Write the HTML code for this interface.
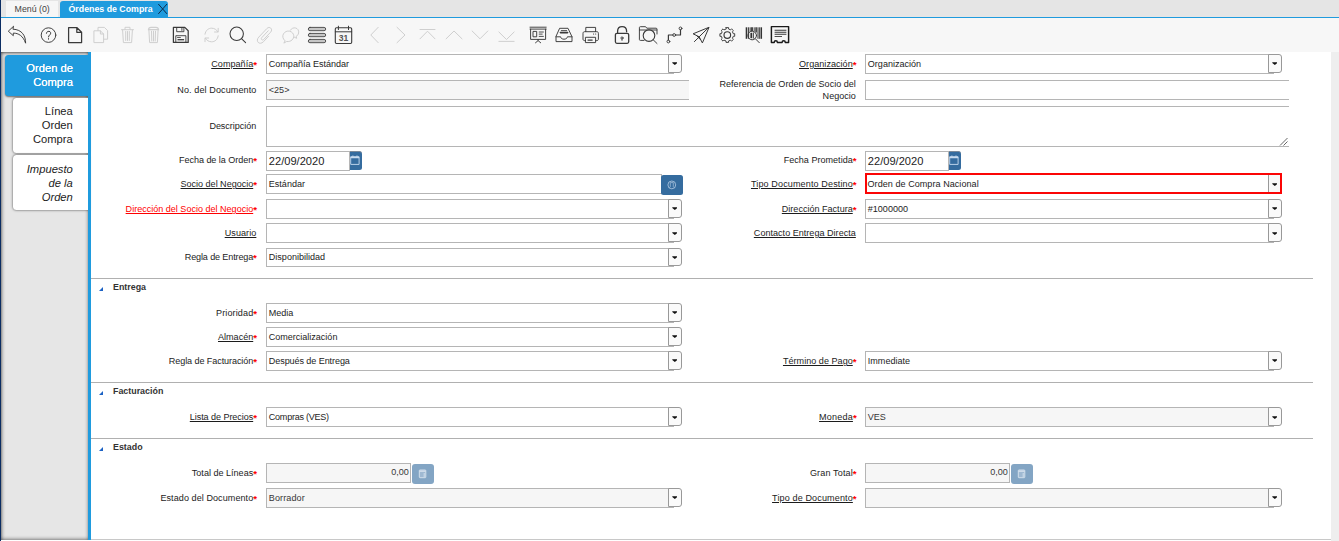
<!DOCTYPE html>
<html lang="es"><head><meta charset="utf-8"><title>Órdenes de Compra</title>
<style>
html,body{margin:0;padding:0}
body{width:1339px;height:541px;overflow:hidden;background:#fff;position:relative;font-family:"Liberation Sans",sans-serif;font-size:9px;color:#333}
div,span{box-sizing:border-box}
.a{position:absolute}
#tabbar{left:0;top:0;width:1339px;height:17px;background:#e5e5e5}
#navy{left:0;top:0;width:1.3px;height:541px;background:#0b2d63}
#tab1{left:6px;top:1px;width:52.4px;height:16px;background:#f6f6f6;color:#444;font-size:8.8px;line-height:16px;text-align:center}
#tab2{left:60px;top:1px;width:108px;height:17px;background:#1f9bde;border-radius:3px 3px 0 0;color:#fff;font-weight:bold;font-size:8.8px;line-height:16px;padding-left:8.5px;white-space:nowrap}
#bline{left:0;top:17px;width:1339px;height:1.2px;background:#1f9bde}
#toolbar{left:1px;top:18px;width:1338px;height:34px;background:#f7f7f7}
#side{left:1px;top:52px;width:88px;height:487.5px;background:#e6e6e6;box-shadow:inset 0 0 4px 0 rgba(0,0,0,.7),inset 0 1px 2px 0 rgba(0,0,0,.25)}
#vline{left:88.3px;top:52px;width:2.5px;height:488px;background:#1f9bde;z-index:3}
#rstrip{left:1331px;top:52px;width:8px;height:489px;background:#eee}
#botline{left:91px;top:539px;width:1240px;height:1px;background:#c8c8c8}
.stab{right:1250px;text-align:right;font-size:11.2px;line-height:14.2px;padding-right:16px;color:#222}
#st1{left:5px;top:55px;width:84px;height:41px;background:#1f9bde;border-radius:3.5px 0 0 3.5px;color:#fff;padding-top:6px;text-shadow:0 0 .4px #fff;box-shadow:0 1px 2px rgba(0,0,0,.55)}
#st2{left:12.8px;top:97.8px;width:76px;height:54.8px;background:#fff;border-radius:3.5px 0 0 3.5px;padding-top:6px;box-shadow:0 0 2.5px rgba(0,0,0,.75)}
#st3{left:12.8px;top:155px;width:76px;height:54.8px;background:#fff;border-radius:3.5px 0 0 3.5px;padding-top:7px;font-style:italic;box-shadow:0 0 2.5px rgba(0,0,0,.75)}
.lbl{height:20px;line-height:20px;text-align:right;white-space:nowrap;color:#1c1c1c;font-size:9.05px}
.lbl u{text-decoration:underline;text-underline-offset:1px}
.lbl i{font-style:normal;color:#f00;font-size:9.7px;font-weight:bold;position:relative;top:0.9px;line-height:0}
.red{color:#f00}
.fld{height:19.5px;border:1px solid #b5b5b5;background:#fff;font-size:9.05px;line-height:17.5px;padding-left:1.8px;padding-top:0.8px;color:#1c1c1c;white-space:nowrap;overflow:hidden}
.ro{background:#f6f6f6;color:#363636}
.cbtn{width:13.5px;height:18.7px;border:1px solid #999;border-radius:0 3px 3px 0;background:#fafafa}
.arr{width:5.6px;height:3.7px}
.stub{height:1px;background:#b5b5b5;width:5px}
.sep{left:91px;width:1222px;height:1px;background:#b0b0b0}
.grp{left:113px;font-weight:bold;font-size:8.9px;line-height:12px;height:12px;color:#333}
.tri{left:99.4px;width:0;height:0;border-left:4.7px solid transparent;border-bottom:4.4px solid #1c62c4}
.date{font-size:11.1px;width:84px;padding-top:1.1px}
.dbtn{width:12px;height:19px;background:#356c9f;border-radius:0 2.5px 2.5px 0;border-top:1px solid #7d8a98}
.sbtn{width:21.8px;height:19.8px;background:#356c9f;border-radius:2.5px}
.nbtn{width:21.8px;height:19.8px;background:#83a5c4;border-radius:3px}
</style></head>
<body>
<div class="a" id="tabbar"></div>
<div class="a" id="tab1">Menú (0)</div>
<div class="a" id="tab2">Órdenes de Compra</div>
<svg class="a" style="left:156px;top:2px" width="13" height="14" viewBox="156 2 13 14"><path d="M158.3 4L167 13.9M167 4L158.3 13.9" stroke="#0b2b4a" stroke-width="1" fill="none"/></svg>

<div class="a" id="toolbar"></div>
<div class="a" id="bline"></div>
<svg class="a" style="left:0;top:0" width="800" height="52" viewBox="0 0 800 52" fill="none" stroke="#3a3a3a" stroke-width="0.95" stroke-linecap="round" stroke-linejoin="round">
<!-- undo -->
<path d="M13.3 26.5L8.3 31.2L13.3 35.7V33.1C18.6 33.1 23.2 36 25.6 43.2C25.8 36 22 29.5 13.3 29.2Z"/>
<!-- help -->
<circle cx="48.5" cy="35.1" r="7.3"/>
<path d="M46.4 33.3C46.4 30.6 50.7 30.6 50.7 33.2C50.7 34.9 48.5 35 48.5 36.9M48.5 38.6V39.2" stroke-width="1"/>
<!-- new -->
<path d="M68.6 27.5H76.8L81.6 32.3V42.5H68.6ZM76.8 27.5V32.3H81.6" stroke-width="1.25"/>
<g stroke="#cfcfcf" stroke-width="1">
<!-- copy -->
<path d="M98 30.5V27.4H104.4L107.6 30.6V39.2H103.8"/>
<path d="M94.3 30.8H100.4L103.6 34V42.6H94.3ZM100.4 30.8V34H103.6"/>
<!-- trash 1 -->
<path d="M121.5 29.7H133.5M125 29.5V27.3H130V29.5M122.6 29.9L123.4 42.6H131.6L132.4 29.9M125.7 31.5V40.5M127.5 31.5V40.5M129.3 31.5V40.5"/>
<!-- trash 2 -->
<path d="M148.4 29.7C148.6 28 149.8 27.3 151 27.3H156C157.2 27.3 158.4 28 158.6 29.7M148.4 29.7H158.6" stroke-width="1.2"/>
<path d="M148.9 30L149.6 42.6H157.4L158.1 30M151.5 31.2L151.8 41M153.5 31.2V41M155.5 31.2L155.2 41"/>
<!-- refresh -->
<path d="M205 34.2C205.6 30.2 208.5 28.2 211.6 28.2C214.3 28.2 216.6 29.6 217.8 31.8M218.2 28.3V32H214.5"/>
<path d="M218.2 35.8C217.6 39.8 214.7 41.8 211.6 41.8C208.9 41.8 206.6 40.4 205.4 38.2M205 41.7V38H208.7"/>
<!-- attach -->
<path d="M268.2 30.8L261.8 37.6C260.4 39.1 262.3 40.9 263.7 39.5L270.6 32.2C273.4 29.2 269.6 25.6 266.8 28.6L258.8 37.1C254.8 41.4 259.8 45.6 263.5 41.7L268.6 36.2"/>
<!-- chat -->
<path d="M290.4 30.2C292.6 26 299.5 27.5 298.6 33C298.3 34.6 297.3 35.8 296.2 36.4L296.6 38.3L294.4 37.2"/>
<path d="M284.8 40.6C279.8 36.2 284.6 30 289.6 31.2C296.4 33 294.4 42.4 286.6 41.5L284.2 42.9Z"/>
<!-- nav -->
<path d="M378.2 27.3L370.8 35L378.2 42.7"/>
<path d="M397 27.3L405 35L397 42.7"/>
<path d="M420 29.5H435M420 38.8L427.5 31.2L435 38.8"/>
<path d="M446.1 38.8L454 31L462 38.8"/>
<path d="M472.1 31L480 38.8L487.8 31"/>
<path d="M498.9 32L506.5 39.5L514.1 32M498.9 41.4H514.1"/>
</g>
<!-- save -->
<path d="M173.4 27.4H184.8L188.2 30.8V42.4H173.4Z" stroke-width="1.25"/>
<path d="M176.7 27.6V31.7H183.9V27.6M181.9 28.4V30.4" stroke-width="0.9"/>
<path d="M175.8 42.2V35.7H185.9V42.2" stroke-width="0.9"/>
<path d="M177.5 37.5H180.4" stroke-width="0.8"/>
<path d="M177.5 39.7H184.1" stroke-width="1.3" stroke-linecap="butt"/>
<!-- search -->
<circle cx="236.7" cy="33.8" r="6.7" stroke-width="1.05"/>
<path d="M241.5 38.7L245.6 42.7" stroke-width="1.05"/>
<!-- list -->
<g fill="#c6c6c6" stroke-width="0.85">
<rect x="308.3" y="27.4" width="17.4" height="3.3" rx="1.65"/>
<rect x="308.3" y="33.4" width="17.4" height="3.3" rx="1.65"/>
<rect x="308.3" y="39.4" width="17.4" height="3.3" rx="1.65"/>
</g>
<!-- calendar -->
<rect x="335.3" y="27.8" width="16.4" height="15.7" rx="1.2" stroke-width="1.1"/>
<path d="M335.3 31.8H351.7M338.4 26.2V29.6M348.5 26.2V29.6" stroke-width="1"/>
<text x="343.6" y="41.3" font-family="Liberation Sans, sans-serif" font-size="8.6" font-weight="bold" text-anchor="middle" fill="#555" stroke="none">31</text>
<!-- presentation -->
<path d="M530 27.2H546.2M530 29.1H546.2M530.6 29.1V39.4H545.6V29.1M538.1 39.4V40.6L535.5 42.8M538.1 40.6L540.7 42.8"/>
<rect x="533.4" y="31.4" width="3.3" height="5.4"/>
<path d="M539.2 32H543.4M539.2 34.1H542.2M539.2 36.4H543.4" stroke-width="0.9"/>
<!-- inbox -->
<path d="M560 28.3H568L572 36.8V41.6H556V36.8ZM556 36.8H560.6C560.9 40 567.1 40 567.4 36.8H572"/>
<path d="M561.3 30.6H566.7" stroke-width="0.9"/><path d="M560.4 32.6H567.6" stroke-width="1.6"/>
<!-- print -->
<path d="M585.8 31.6V27.4H595.6V31.6M585.6 40.6H584.6C583.6 40.6 583 40 583 39V33.3C583 32.3 583.6 31.7 584.6 31.7H596.8C597.8 31.7 598.4 32.3 598.4 33.3V39C598.4 40 597.8 40.6 596.8 40.6H595.8M585.8 37.3H595.6V42.6H585.8Z"/>
<path d="M588 40.1H592.2" stroke-width="1.2"/><path d="M593.5 34H593.6M595.6 34H595.7" stroke-width="1.1"/>
<!-- lock -->
<rect x="615.4" y="33.3" width="13.3" height="10" rx="1.5" stroke-width="1.3"/>
<path d="M617.6 33.2V31.2C617.6 25.2 626.6 25.2 626.6 31.2V31.8" stroke-width="1.3"/>
<circle cx="622" cy="38" r="1.1" stroke-width="0.9"/><path d="M622 39.2V40.4" stroke-width="0.9"/>
<!-- folder zoom -->
<path d="M644 40.4H640.4C639.7 40.4 639.4 40.1 639.4 39.4V27.6C639.4 27 639.7 26.7 640.4 26.7H645.6L646.8 28.2H656C656.7 28.2 657 28.5 657 29.2V34M639.4 30H656.8"/>
<circle cx="649" cy="35.6" r="5.8" stroke-width="1.1"/><path d="M653.2 39.8L657 43.5"/>
<!-- workflow -->
<path d="M668.4 40V35H672.7M675.7 35H680.5V29.9" stroke-width="1.2"/>
<circle cx="668.4" cy="41.5" r="1.4"/><circle cx="674.2" cy="35" r="1.4"/><circle cx="680.5" cy="28.4" r="1.4"/>
<!-- send -->
<path d="M708.7 27.4L693.1 33.8L699.2 36.8L702.2 42.6ZM708.7 27.4L699.2 36.8M698.8 37.3L694.4 41.6M697 36L700.6 39.8" stroke-width="1"/>
<!-- gear -->
<circle cx="727.3" cy="35" r="3.3" stroke-width="1.15"/>
<path d="M726.00 27.61L728.60 27.61L728.57 29.03L730.62 29.88L731.60 28.86L733.44 30.70L732.42 31.68L733.27 33.73L734.69 33.70L734.69 36.30L733.27 36.27L732.42 38.32L733.44 39.30L731.60 41.14L730.62 40.12L728.57 40.97L728.60 42.39L726.00 42.39L726.03 40.97L723.98 40.12L723.00 41.14L721.16 39.30L722.18 38.32L721.33 36.27L719.91 36.30L719.91 33.70L721.33 33.73L722.18 31.68L721.16 30.70L723.00 28.86L723.98 29.88L726.03 29.03Z" stroke-width="0.95"/>
<!-- barcode zoom -->
<g stroke-linecap="butt" stroke="#333">
<path d="M746.5 27.3V38.8" stroke-width="1.6"/><path d="M748.6 27.3V38.8" stroke-width="1"/><path d="M750.2 27.3V31.6" stroke-width="0.9"/><path d="M752 27.3V31" stroke-width="1.8"/><path d="M754.2 27.3V31.3" stroke-width="0.9"/><path d="M756.1 27.3V32.6" stroke-width="1.5"/><path d="M758 27.3V38.8" stroke-width="1"/><path d="M759.6 27.3V38.8" stroke-width="0.9"/><path d="M761.3 27.3V38.8" stroke-width="1.5"/>
<path d="M751.3 32.8V38.2" stroke-width="1.8"/><path d="M753.4 32.4V38.6" stroke-width="0.9"/>
</g>
<circle cx="752.2" cy="35.5" r="4.3" stroke-width="1"/><path d="M755.3 38.7L759.3 42.7" stroke-width="1"/>
<!-- report -->
<path d="M771.4 42.4V26.6H788.6V42.4H785.3C785.3 40.2 782.1 40.2 782.1 42.4H777.4C777.4 40.2 774.2 40.2 774.2 42.4Z" stroke="#1a1a1a" stroke-width="1.45"/>
<path d="M774.6 30.2H786.4M774.6 32.2H786.4M774.6 34.2H786.4" stroke-width="1.1" stroke-linecap="butt"/><path d="M774.6 36.5H782" stroke-width="0.9" stroke-linecap="butt"/>
</svg>

<div class="a" id="side"></div>
<div class="a" id="vline"></div>
<div class="a" id="rstrip"></div>
<div class="a" id="botline"></div>
<div class="a" id="navy"></div>
<div class="a stab" id="st1">Orden de<br>Compra</div>
<div class="a stab" id="st2">Línea<br>Orden<br>Compra</div>
<div class="a stab" id="st3">Impuesto<br>de la<br>Orden</div>
<div class="a lbl" style="right:1081.97px;top:54.0px"><u><span style="letter-spacing:0.031px">Compañía</span></u><i>*</i></div>
<div class="a fld" style="left:266.0px;top:54.2px;width:403.5px;letter-spacing:-0.010px">Compañía Estándar</div>
<div class="a stub" style="left:668.5px;top:72.7px"></div>
<div class="a cbtn" style="left:668.3px;top:54.2px"></div>
<svg class="a arr" style="left:671.7px;top:62.3px" viewBox="0 0 6 4"><path d="M0.3 0.4H5.7V1.2L3 3.25L0.3 1.2Z" fill="#111"/></svg>
<div class="a lbl" style="right:1082.60px;top:79.8px"><span style="letter-spacing:0.097px">No. del Documento</span></div>
<div class="a fld ro" style="left:266px;top:80.2px;width:423px;border-right:none">&lt;25&gt;</div>
<div class="a lbl" style="right:1082.73px;top:116.0px"><span style="letter-spacing:-0.033px">Descripción</span></div>
<div class="a fld" style="left:266px;top:106.2px;width:1023px;height:40.5px;border-right:none"></div>
<svg class="a" style="left:1279px;top:137px" width="9" height="9" viewBox="0 0 9 9"><path d="M1 8.5L8.5 1M4.5 8.5L8.5 4.5" stroke="#555" stroke-width="0.9" fill="none"/></svg>
<div class="a lbl" style="right:1082.04px;top:150.2px"><span style="letter-spacing:-0.043px">Fecha de la Orden</span><i>*</i></div>
<div class="a fld date" style="left:266px;top:151.2px">22/09/2020</div>
<div class="a dbtn" style="left:349.6px;top:151px"></div>
<svg class="a" style="left:349.1px;top:151.2px" width="12" height="19" viewBox="0 0 12 19"><path d="M1.7 5.8H10.1V13.4H1.7Z" fill="none" stroke="#c9dcf0" stroke-width="0.9"/><path d="M1.7 6.4H10.1" stroke="#c9dcf0" stroke-width="1.7"/><path d="M3.9 4.4V6.4M8 4.4V6.4" stroke="#c9dcf0" stroke-width="0.8"/></svg>
<div class="a lbl" style="right:1082.01px;top:174.3px"><u><span style="letter-spacing:-0.014px">Socio del Negocio</span></u><i>*</i></div>
<div class="a fld" style="left:266px;top:174px;width:396px;height:20px;padding-top:1px">Estándar</div>
<div class="a sbtn" style="left:661.2px;top:175px"></div>
<svg class="a" style="left:661.2px;top:175.0px" width="22" height="20" viewBox="0 0 22 20"><circle cx="10.8" cy="9.9" r="3.9" fill="none" stroke="#b5cce3" stroke-width="0.8"/><path d="M9.3 7.6V11.6M12.3 7.6V11.6M9.3 11.6L8.3 12.7M12.3 11.6L13.3 12.7M9.3 7.6H12.3" fill="none" stroke="#b5cce3" stroke-width="0.65"/></svg>
<div class="a lbl red" style="right:1082.00px;top:199.0px"><u><span style="letter-spacing:-0.004px">Dirección del Socio del Negocio</span></u><i>*</i></div>
<div class="a fld" style="left:266.0px;top:199.2px;width:403.5px"></div>
<div class="a stub" style="left:668.5px;top:217.7px"></div>
<div class="a cbtn" style="left:668.3px;top:199.2px"></div>
<svg class="a arr" style="left:671.7px;top:207.3px" viewBox="0 0 6 4"><path d="M0.3 0.4H5.7V1.2L3 3.25L0.3 1.2Z" fill="#111"/></svg>
<div class="a lbl" style="right:1082.63px;top:223.0px"><u><span style="letter-spacing:0.073px">Usuario</span></u></div>
<div class="a fld" style="left:266.0px;top:223.4px;width:403.5px"></div>
<div class="a stub" style="left:668.5px;top:241.9px"></div>
<div class="a cbtn" style="left:668.3px;top:223.4px"></div>
<svg class="a arr" style="left:671.7px;top:231.5px" viewBox="0 0 6 4"><path d="M0.3 0.4H5.7V1.2L3 3.25L0.3 1.2Z" fill="#111"/></svg>
<div class="a lbl" style="right:1082.13px;top:246.9px"><span style="letter-spacing:-0.133px">Regla de Entrega</span><i>*</i></div>
<div class="a fld" style="left:266.0px;top:247.5px;width:403.5px">Disponibilidad</div>
<div class="a stub" style="left:668.5px;top:266.0px"></div>
<div class="a cbtn" style="left:668.3px;top:247.5px"></div>
<svg class="a arr" style="left:671.7px;top:255.6px" viewBox="0 0 6 4"><path d="M0.3 0.4H5.7V1.2L3 3.25L0.3 1.2Z" fill="#111"/></svg>
<div class="a lbl" style="right:482.47px;top:54.0px"><u><span style="letter-spacing:0.032px">Organización</span></u><i>*</i></div>
<div class="a fld" style="left:865.0px;top:54.2px;width:404.5px">Organización</div>
<div class="a stub" style="left:1268.5px;top:72.7px"></div>
<div class="a cbtn" style="left:1268.3px;top:54.2px"></div>
<svg class="a arr" style="left:1271.7px;top:62.3px" viewBox="0 0 6 4"><path d="M0.3 0.4H5.7V1.2L3 3.25L0.3 1.2Z" fill="#111"/></svg>
<div class="a lbl" style="right:483.2px;top:79.2px;line-height:11.9px;height:24px;white-space:normal;width:150px">Referencia de Orden de Socio del Negocio</div>
<div class="a fld" style="left:865px;top:80.2px;width:424px;border-right:none"></div>
<div class="a lbl" style="right:482.49px;top:150.2px"><span style="letter-spacing:0.007px">Fecha Prometida</span><i>*</i></div>
<div class="a fld date" style="left:865px;top:151.2px">22/09/2020</div>
<div class="a dbtn" style="left:948.6px;top:151px"></div>
<svg class="a" style="left:948.1px;top:151.2px" width="12" height="19" viewBox="0 0 12 19"><path d="M1.7 5.8H10.1V13.4H1.7Z" fill="none" stroke="#c9dcf0" stroke-width="0.9"/><path d="M1.7 6.4H10.1" stroke="#c9dcf0" stroke-width="1.7"/><path d="M3.9 4.4V6.4M8 4.4V6.4" stroke="#c9dcf0" stroke-width="0.8"/></svg>
<div class="a lbl" style="right:482.38px;top:174.3px"><u><span style="letter-spacing:0.121px">Tipo Documento Destino</span></u><i>*</i></div>
<div class="a fld" style="left:864.5px;top:173.3px;width:417.8px;height:21px;border:2px solid #fb0505;line-height:17.8px;padding-left:1px;letter-spacing:0.044px">Orden de Compra Nacional</div>
<div class="a" style="left:1268.3px;top:175.0px;width:12px;height:17px;background:#f8f8f8;border-left:1px solid #999"></div>
<svg class="a arr" style="left:1271.7px;top:182.6px" viewBox="0 0 6 4"><path d="M0.3 0.4H5.7V1.2L3 3.25L0.3 1.2Z" fill="#111"/></svg>
<div class="a lbl" style="right:482.50px;top:199.0px"><u><span style="letter-spacing:-0.000px">Dirección Factura</span></u><i>*</i></div>
<div class="a fld" style="left:865.0px;top:199.2px;width:404.5px;letter-spacing:-0.008px">#1000000</div>
<div class="a stub" style="left:1268.5px;top:217.7px"></div>
<div class="a cbtn" style="left:1268.3px;top:199.2px"></div>
<svg class="a arr" style="left:1271.7px;top:207.3px" viewBox="0 0 6 4"><path d="M0.3 0.4H5.7V1.2L3 3.25L0.3 1.2Z" fill="#111"/></svg>
<div class="a lbl" style="right:483.18px;top:222.8px"><u><span style="letter-spacing:0.017px">Contacto Entrega Directa</span></u></div>
<div class="a fld" style="left:865.0px;top:223.4px;width:404.5px"></div>
<div class="a stub" style="left:1268.5px;top:241.9px"></div>
<div class="a cbtn" style="left:1268.3px;top:223.4px"></div>
<svg class="a arr" style="left:1271.7px;top:231.5px" viewBox="0 0 6 4"><path d="M0.3 0.4H5.7V1.2L3 3.25L0.3 1.2Z" fill="#111"/></svg>
<div class="a sep" style="top:278px"></div>
<div class="a tri" style="top:287.3px"></div>
<div class="a grp" style="top:281px">Entrega</div>
<div class="a lbl" style="right:1081.87px;top:303.0px"><span style="letter-spacing:0.131px">Prioridad</span><i>*</i></div>
<div class="a fld" style="left:266.0px;top:303.2px;width:403.5px;letter-spacing:-0.028px">Media</div>
<div class="a stub" style="left:668.5px;top:321.7px"></div>
<div class="a cbtn" style="left:668.3px;top:303.2px"></div>
<svg class="a arr" style="left:671.7px;top:311.3px" viewBox="0 0 6 4"><path d="M0.3 0.4H5.7V1.2L3 3.25L0.3 1.2Z" fill="#111"/></svg>
<div class="a lbl" style="right:1082.00px;top:327.1px"><u><span style="letter-spacing:-0.000px">Almacén</span></u><i>*</i></div>
<div class="a fld" style="left:266.0px;top:327.3px;width:403.5px;letter-spacing:-0.018px">Comercialización</div>
<div class="a stub" style="left:668.5px;top:345.8px"></div>
<div class="a cbtn" style="left:668.3px;top:327.3px"></div>
<svg class="a arr" style="left:671.7px;top:335.4px" viewBox="0 0 6 4"><path d="M0.3 0.4H5.7V1.2L3 3.25L0.3 1.2Z" fill="#111"/></svg>
<div class="a lbl" style="right:1082.09px;top:351.0px"><span style="letter-spacing:-0.085px">Regla de Facturación</span><i>*</i></div>
<div class="a fld" style="left:266.0px;top:351.2px;width:403.5px;letter-spacing:-0.082px">Después de Entrega</div>
<div class="a stub" style="left:668.5px;top:369.7px"></div>
<div class="a cbtn" style="left:668.3px;top:351.2px"></div>
<svg class="a arr" style="left:671.7px;top:359.3px" viewBox="0 0 6 4"><path d="M0.3 0.4H5.7V1.2L3 3.25L0.3 1.2Z" fill="#111"/></svg>
<div class="a lbl" style="right:482.47px;top:351.0px"><u><span style="letter-spacing:0.026px">Término de Pago</span></u><i>*</i></div>
<div class="a fld" style="left:865.0px;top:351.2px;width:404.5px">Immediate</div>
<div class="a stub" style="left:1268.5px;top:369.7px"></div>
<div class="a cbtn" style="left:1268.3px;top:351.2px"></div>
<svg class="a arr" style="left:1271.7px;top:359.3px" viewBox="0 0 6 4"><path d="M0.3 0.4H5.7V1.2L3 3.25L0.3 1.2Z" fill="#111"/></svg>
<div class="a sep" style="top:382px"></div>
<div class="a tri" style="top:391.3px"></div>
<div class="a grp" style="top:385px">Facturación</div>
<div class="a lbl" style="right:1082.06px;top:407.2px"><u><span style="letter-spacing:-0.061px">Lista de Precios</span></u><i>*</i></div>
<div class="a fld" style="left:266.0px;top:407.4px;width:403.5px;letter-spacing:-0.257px">Compras (VES)</div>
<div class="a stub" style="left:668.5px;top:425.9px"></div>
<div class="a cbtn" style="left:668.3px;top:407.4px"></div>
<svg class="a arr" style="left:671.7px;top:415.5px" viewBox="0 0 6 4"><path d="M0.3 0.4H5.7V1.2L3 3.25L0.3 1.2Z" fill="#111"/></svg>
<div class="a lbl" style="right:482.30px;top:407.2px"><u><span style="letter-spacing:0.199px">Moneda</span></u><i>*</i></div>
<div class="a fld ro" style="left:865.0px;top:407.4px;width:404.5px">VES</div>
<div class="a stub" style="left:1268.5px;top:425.9px"></div>
<div class="a cbtn" style="left:1268.3px;top:407.4px"></div>
<svg class="a arr" style="left:1271.7px;top:415.5px" viewBox="0 0 6 4"><path d="M0.3 0.4H5.7V1.2L3 3.25L0.3 1.2Z" fill="#111"/></svg>
<div class="a sep" style="top:438px"></div>
<div class="a tri" style="top:447.3px"></div>
<div class="a grp" style="top:441px">Estado</div>
<div class="a lbl" style="right:1082.00px;top:463.0px"><span style="letter-spacing:0.002px">Total de Líneas</span><i>*</i></div>
<div class="a fld ro" style="left:266px;top:463.1px;width:145px;text-align:right;padding-right:1.2px;padding-top:0">0,00</div>
<div class="a nbtn" style="left:412.2px;top:464.2px"></div>
<svg class="a" style="left:412.2px;top:464.2px" width="22" height="20" viewBox="0 0 22 20"><rect x="7.3" y="6" width="6.5" height="7.7" rx="0.6" fill="#9fb9d2" stroke="#d9e4ef" stroke-width="0.9"/><path d="M7.5 7.2H13.6" stroke="#d9e4ef" stroke-width="1.2"/><path d="M12.2 9V13" stroke="#d9e4ef" stroke-width="0.9"/></svg>
<div class="a lbl" style="right:482.37px;top:463.0px"><span style="letter-spacing:0.132px">Gran Total</span><i>*</i></div>
<div class="a fld ro" style="left:865px;top:463.1px;width:145px;text-align:right;padding-right:1.2px;padding-top:0">0,00</div>
<div class="a nbtn" style="left:1011.2px;top:464.2px"></div>
<svg class="a" style="left:1011.2px;top:464.2px" width="22" height="20" viewBox="0 0 22 20"><rect x="7.3" y="6" width="6.5" height="7.7" rx="0.6" fill="#9fb9d2" stroke="#d9e4ef" stroke-width="0.9"/><path d="M7.5 7.2H13.6" stroke="#d9e4ef" stroke-width="1.2"/><path d="M12.2 9V13" stroke="#d9e4ef" stroke-width="0.9"/></svg>
<div class="a lbl" style="right:1081.93px;top:488.0px"><span style="letter-spacing:0.068px">Estado del Documento</span><i>*</i></div>
<div class="a fld ro" style="left:266.0px;top:488.2px;width:403.5px;letter-spacing:0.100px">Borrador</div>
<div class="a stub" style="left:668.5px;top:506.7px"></div>
<div class="a cbtn" style="left:668.3px;top:488.2px"></div>
<svg class="a arr" style="left:671.7px;top:496.3px" viewBox="0 0 6 4"><path d="M0.3 0.4H5.7V1.2L3 3.25L0.3 1.2Z" fill="#111"/></svg>
<div class="a lbl" style="right:482.37px;top:488.0px"><u><span style="letter-spacing:0.128px">Tipo de Documento</span></u><i>*</i></div>
<div class="a fld ro" style="left:865.0px;top:488.2px;width:404.5px"></div>
<div class="a stub" style="left:1268.5px;top:506.7px"></div>
<div class="a cbtn" style="left:1268.3px;top:488.2px"></div>
<svg class="a arr" style="left:1271.7px;top:496.3px" viewBox="0 0 6 4"><path d="M0.3 0.4H5.7V1.2L3 3.25L0.3 1.2Z" fill="#111"/></svg>
</body></html>
